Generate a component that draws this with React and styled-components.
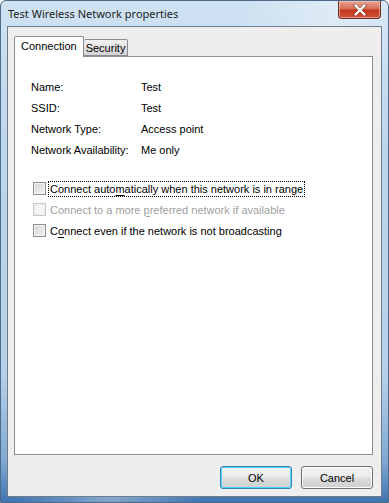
import { Fragment } from 'react';
import styled, { createGlobalStyle } from 'styled-components';

const GlobalStyle = createGlobalStyle`
  html, body {
    margin: 0;
    padding: 0;
    background: #ffffff;
  }
  body {
    font-family: 'Liberation Sans', Arial, sans-serif;
  }
`;

const Window = styled.div`
  width: 389px;
  height: 503px;
  box-sizing: border-box;
  display: flex;
  flex-direction: column;
  border: 1px solid #4d6a86;
  border-radius: 6px 6px 0 0;
  background:
    linear-gradient(115deg, rgba(255, 255, 255, 0) 40%, rgba(255, 255, 255, 0.35) 55%, rgba(255, 255, 255, 0) 70%),
    linear-gradient(180deg, #cfe2f2 0%, #bcd6ec 30%, #b5d0e8 75%, #7fa8d2 92%, #3f73b0 100%);
`;

const TitleBar = styled.div`
  height: 25px;
  flex: none;
  display: flex;
  justify-content: space-between;
  align-items: flex-start;
  padding: 0 7px 0 7px;
`;

const Title = styled.div`
  font-family: 'Noto Sans', 'DejaVu Sans', sans-serif;
  font-size: 11px;
  color: #1e1e1e;
  margin-top: 5px;
`;

const CloseButton = styled.div`
  width: 43px;
  height: 18px;
  box-sizing: border-box;
  border: 1px solid #6d2a22;
  border-top: none;
  border-radius: 0 0 4px 4px;
  background: linear-gradient(180deg, #e6a491 0%, #d66f58 45%, #c2371d 55%, #d0543a 100%);
  display: flex;
  align-items: center;
  justify-content: center;
  box-shadow: inset 0 0 0 1px rgba(255, 220, 210, 0.5);
`;

const Client = styled.div`
  flex: 1;
  margin: 0 6px 5px 6px;
  border: 1px solid #6f7d8c;
  background: #eeeeee;
  display: flex;
  flex-direction: column;
  padding: 9px 8px 0 6px;
`;

const TabStrip = styled.div`
  display: flex;
  align-items: flex-end;
  height: 20px;
  flex: none;
  position: relative;
  z-index: 1;
`;

const Tab = styled.div`
  box-sizing: border-box;
  height: ${(p) => (p.$active ? '21px' : '17px')};
  margin-bottom: ${(p) => (p.$active ? '-1px' : '0')};
  padding: ${(p) => (p.$active ? '3px 6px 0 6px' : '2px 2px 0 2px')};
  font-size: 11px;
  color: #000;
  border: 1px solid #898c95;
  border-bottom: ${(p) => (p.$active ? 'none' : '1px solid #898c95')};
  border-left: ${(p) => (p.$first ? '1px solid #898c95' : 'none')};
  border-radius: 2px 2px 0 0;
  background: ${(p) => (p.$active ? '#ffffff' : 'linear-gradient(180deg, #f2f2f2 0%, #e2e2e2 50%, #d4d4d4 100%)')};
`;

const Panel = styled.div`
  height: 399px;
  flex: none;
  box-sizing: border-box;
  border: 1px solid #898c95;
  background: #ffffff;
  padding: 19px 16px 0 16px;
`;

const InfoTable = styled.div`
  display: grid;
  grid-template-columns: 110px 1fr;
  grid-auto-rows: 21px;
  font-size: 11px;
  color: #000;
  align-items: center;
  white-space: nowrap;
`;

const Options = styled.div`
  margin-top: 18px;
  display: flex;
  flex-direction: column;
`;

const OptionRow = styled.label`
  height: 21px;
  display: flex;
  align-items: center;
  font-size: 11px;
  color: ${(p) => (p.$disabled ? '#a0a0a0' : '#000')};
  padding-left: 2px;
  white-space: nowrap;
`;

const Box = styled.span`
  width: 13px;
  height: 13px;
  box-sizing: border-box;
  border: 1px solid ${(p) => (p.$disabled ? '#c9c9c9' : '#8e8f8f')};
  background: ${(p) =>
    p.$disabled
      ? '#f4f4f4'
      : 'linear-gradient(135deg, #d6d6d6 0%, #e8e8e8 60%, #f4f4f4 100%)'};
  box-shadow: inset 0 0 0 1px ${(p) => (p.$disabled ? '#ececec' : '#f4f4f4')};
  margin-right: 3px;
  flex: none;
`;

const OptionText = styled.span`
  padding: 0 1px;
  outline: ${(p) => (p.$focused ? '1px dotted #000' : 'none')};
  line-height: 14px;
`;

const Key = styled.span`
  text-decoration: underline;
  text-underline-offset: 2px;
`;

const ButtonRow = styled.div`
  margin-top: 11px;
  flex: none;
  display: flex;
  justify-content: flex-end;
  gap: 9px;
`;

const Button = styled.div`
  width: 72px;
  height: 23px;
  box-sizing: border-box;
  border: 1px solid ${(p) => (p.$default ? '#3c7fb1' : '#707070')};
  border-radius: 3px;
  background: linear-gradient(180deg, #f2f2f2 0%, #ebebeb 48%, #dddddd 52%, #cfcfcf 100%);
  box-shadow: inset 0 0 0 1px ${(p) => (p.$default ? '#48d7f8' : '#fcfcfc')};
  display: flex;
  align-items: center;
  justify-content: center;
  font-size: 11px;
  color: #000;
`;

const CloseGlyph = () => (
  <svg width="14" height="12" viewBox="0 0 14 12">
    <path
      d="M2 1.5 L12 10.5 M12 1.5 L2 10.5"
      stroke="#4a1a12"
      strokeWidth="3.6"
      strokeLinecap="round"
      opacity="0.45"
    />
    <path
      d="M2.5 1.5 L11.5 10.5 M11.5 1.5 L2.5 10.5"
      stroke="#ffffff"
      strokeWidth="2.4"
      strokeLinecap="round"
    />
  </svg>
);

const info = [
  ['Name:', 'Test'],
  ['SSID:', 'Test'],
  ['Network Type:', 'Access point'],
  ['Network Availability:', 'Me only'],
];

export default function App() {
  return (
    <>
      <GlobalStyle />
      <Window>
        <TitleBar>
          <Title>Test Wireless Network properties</Title>
          <CloseButton>
            <CloseGlyph />
          </CloseButton>
        </TitleBar>
        <Client>
          <TabStrip>
            <Tab $active $first>Connection</Tab>
            <Tab>Security</Tab>
          </TabStrip>
          <Panel>
            <InfoTable>
              {info.map(([label, value]) => (
                <Fragment key={label}>
                  <span>{label}</span>
                  <span>{value}</span>
                </Fragment>
              ))}
            </InfoTable>
            <Options>
              <OptionRow>
                <Box />
                <OptionText $focused>
                  Connect auto<Key>m</Key>atically when this network is in range
                </OptionText>
              </OptionRow>
              <OptionRow $disabled>
                <Box $disabled />
                <OptionText>
                  Connect to a more <Key>p</Key>referred network if available
                </OptionText>
              </OptionRow>
              <OptionRow>
                <Box />
                <OptionText>
                  C<Key>o</Key>nnect even if the network is not broadcasting
                </OptionText>
              </OptionRow>
            </Options>
          </Panel>
          <ButtonRow>
            <Button $default>OK</Button>
            <Button>Cancel</Button>
          </ButtonRow>
        </Client>
      </Window>
    </>
  );
}
